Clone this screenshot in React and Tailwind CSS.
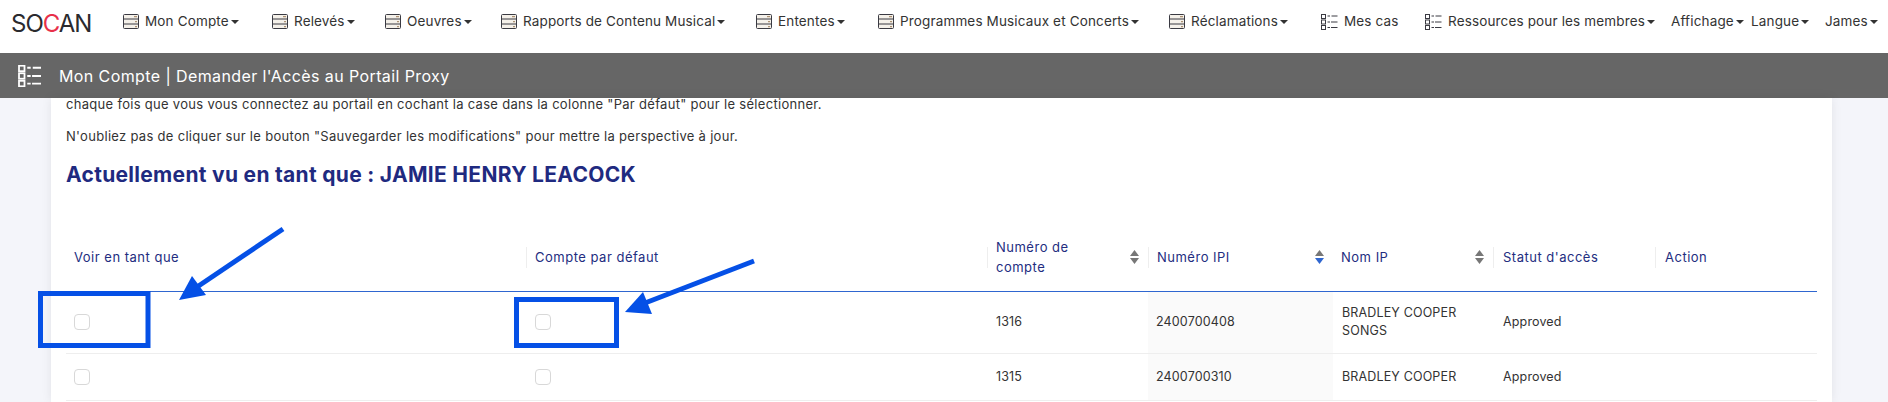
import React from 'react';

const navItems = [
  { label: 'Mon Compte', icon: 'server', caret: true, w: 'w-[149px]' },
  { label: 'Relevés', icon: 'server', caret: true, w: 'w-[113px]' },
  { label: 'Oeuvres', icon: 'server', caret: true, w: 'w-[116px]' },
  { label: 'Rapports de Contenu Musical', icon: 'server', caret: true, w: 'w-[255px]' },
  { label: 'Ententes', icon: 'server', caret: true, w: 'w-[122px]' },
  { label: 'Programmes Musicaux et Concerts', icon: 'server', caret: true, w: 'w-[291px]' },
  { label: 'Réclamations', icon: 'server', caret: true, w: 'w-[152px]' },
  { label: 'Mes cas', icon: 'list', caret: false, w: 'w-[104px]' },
  { label: 'Ressources pour les membres', icon: 'list', caret: true, w: 'w-[246px]' },
];

const rightItems = [
  { label: 'Affichage', w: 'w-[80px]' },
  { label: 'Langue', w: 'w-[74px]' },
  { label: 'James', w: 'w-[54px]' },
];

const ServerIcon = () => (
  <svg width="16" height="15" viewBox="0 0 16 15" className="shrink-0" fill="none">
    <rect x="0.5" y="0.5" width="15" height="14" rx="1" fill="#f5f1ea" stroke="#3a3a42" />
    <path d="M1 5H15M1 10H15" stroke="#3a3a42" />
    <path d="M11 2.7H14M12 7.7H14M12 12.7H14" stroke="#9a7a58" />
  </svg>
);

const ListIcon = ({ width = 17, height = 16, color = '#3a3a42', weight = 1 }) => (
  <svg width={width} height={height} viewBox="0 0 17 16" className="shrink-0" fill="none" stroke={color} strokeWidth={weight}>
    <rect x="0.5" y="0.5" width="4" height="4" />
    <rect x="0.5" y="6" width="4" height="4" />
    <rect x="0.5" y="11.5" width="4" height="4" />
    <path d="M6.5 2H9M10.5 2H16.5M6.5 8H9M10 8H16.5M6.5 13.5H9M10 13.5H16.5" />
  </svg>
);

const Caret = () => (
  <span className="ml-[2px] inline-block h-0 w-0 border-x-[4px] border-t-[4px] border-x-transparent border-t-[#333]"></span>
);

const SortIcon = ({ active }) => (
  <svg width="9" height="14" viewBox="0 0 9 14" className="shrink-0">
    <path d="M4.5 0L9 6H0Z" fill="#777" />
    <path d="M4.5 14L0 8H9Z" fill={active ? '#2f66d0' : '#777'} />
  </svg>
);

const columns = [
  { label: 'Voir en tant que', w: 'w-[460px]', pad: 'pl-[8px]' },
  { label: 'Compte par défaut', w: 'w-[461px]', pad: 'pl-[8px]', sep: true },
  { label: 'Numéro de compte', w: 'w-[161px]', pad: 'pl-[8px]', sep: true, sort: true },
  { label: 'Numéro IPI', w: 'w-[185px]', pad: 'pl-[8px]', sep: true, sort: true, active: true },
  { label: 'Nom IP', w: 'w-[160px]', pad: 'pl-[8px]', sort: true },
  { label: "Statut d'accès", w: 'w-[162px]', pad: 'pl-[9px]', sep: true },
  { label: 'Action', w: 'w-[162px]', pad: 'pl-[9px]', sep: true },
];

const rows = [
  { account: '1316', ipi: '2400700408', name: 'BRADLEY COOPER SONGS', status: 'Approved', h: 'h-[62px]' },
  { account: '1315', ipi: '2400700310', name: 'BRADLEY COOPER', status: 'Approved', h: 'h-[47px]' },
];

const Checkbox = () => (
  <span className="block h-[16px] w-[16px] rounded-[4px] border border-[#d8d8d8] bg-white"></span>
);

export default function App() {
  return (
    <div className="relative h-[402px] w-[1888px] overflow-hidden bg-[#f4f5fa] font-['Inter',sans-serif]">
      <nav className="flex h-[53px] items-center bg-white pb-[10px] text-[13.5px] tracking-[0.15px] text-[#333]">
        <div className="ml-[11px] mt-[4px] w-[112px] text-[24px] leading-none tracking-[-1px] text-[#2a2a2e]">
          SO<span className="text-[#e8304a]">C</span>AN
        </div>
        {navItems.map((item) => (
          <div key={item.label} className={`flex items-center whitespace-nowrap ${item.w}`}>
            {item.icon === 'server' ? <ServerIcon /> : <ListIcon />}
            <span className="ml-[6px]">{item.label}</span>
            {item.caret && <Caret />}
          </div>
        ))}
        {rightItems.map((item) => (
          <div key={item.label} className={`flex items-center whitespace-nowrap ${item.w}`}>
            <span>{item.label}</span>
            <Caret />
          </div>
        ))}
      </nav>

      <header className="flex h-[45px] items-center bg-[#666666] pl-[18px] text-white">
        <ListIcon width={24} height={22} color="#ffffff" weight={1.3} />
        <h1 className="ml-[17px] text-[16px] font-normal tracking-[0.4px]">Mon Compte | Demander l'Accès au Portail Proxy</h1>
      </header>

      <main className="ml-[51px] h-[304px] w-[1781px] bg-white px-[15px] text-[13px] tracking-[0.3px] text-[#333] shadow-[0_0_10px_rgba(0,0,0,0.08)]">
        <p className="leading-[12px]">
          chaque fois que vous vous connectez au portail en cochant la case dans la colonne "Par défaut" pour le sélectionner.
        </p>
        <p className="mt-[19px] leading-[14px]">
          N'oubliez pas de cliquer sur le bouton "Sauvegarder les modifications" pour mettre la perspective à jour.
        </p>
        <h2 className="mt-[20px] text-[21px] font-bold leading-[24px] tracking-[0.3px] text-[#1f2a80]">
          Actuellement vu en tant que : JAMIE HENRY LEACOCK
        </h2>

        <table className="mt-[37px] w-[1751px] table-fixed border-collapse">
          <thead>
            <tr className="h-[67px] border-b border-[#2f66d0]">
              {columns.map((col) => (
                <th key={col.label} className={`${col.w} p-0 text-left align-middle text-[13px] font-normal leading-[20px] tracking-[0.5px] text-[#232d7f]`}>
                  <div className={`flex h-[21px] items-center justify-between pr-[9px] ${col.pad} ${col.sep ? 'border-l border-[#eeeeee]' : ''}`}>
                    <span className={col.label === 'Numéro de compte' ? 'w-[90px]' : ''}>{col.label}</span>
                    {col.sort && <SortIcon active={col.active} />}
                  </div>
                </th>
              ))}
            </tr>
          </thead>
          <tbody>
            {rows.map((row) => (
              <tr key={row.account} className={`${row.h} border-b border-[#eeeeee] text-[12.5px] leading-[18px] tracking-[0.15px] text-[#333]`}>
                <td className="pl-[8px]"><Checkbox /></td>
                <td className="pl-[9px]"><Checkbox /></td>
                <td className="pl-[9px]">{row.account}</td>
                <td className="bg-[#fafafa] pl-[8px]">{row.ipi}</td>
                <td className="pl-[9px] pr-[8px]">{row.name}</td>
                <td className="pl-[10px]">{row.status}</td>
                <td></td>
              </tr>
            ))}
          </tbody>
        </table>
      </main>

      {/* annotation arrows drawn on top of the screenshot */}
      <svg width="1888" height="402" className="pointer-events-none absolute left-0 top-0" fill="none">
        <rect x="40.5" y="293.5" width="107.5" height="52" stroke="#0550e6" strokeWidth="5" />
        <rect x="516.5" y="299.5" width="100" height="46" stroke="#0550e6" strokeWidth="5" />
        <path d="M283 229L197 287" stroke="#0550e6" strokeWidth="5" />
        <path d="M179 300L192 276L206 295Z" fill="#0550e6" />
        <path d="M754 261L645 303" stroke="#0550e6" strokeWidth="5" />
        <path d="M625 312L643 292L652 314Z" fill="#0550e6" />
      </svg>
    </div>
  );
}
